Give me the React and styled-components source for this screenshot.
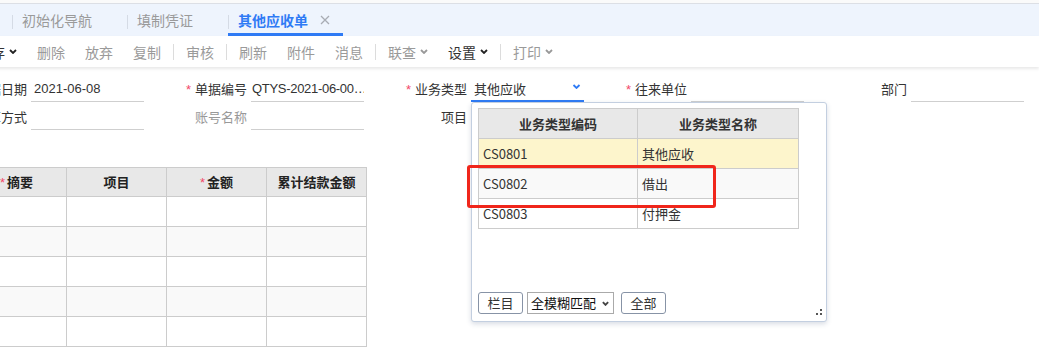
import styled, { createGlobalStyle } from 'styled-components';

const GlobalStyle = createGlobalStyle`
  html, body {
    margin: 0;
    padding: 0;
    background: #fff;
    overflow: hidden;
  }
  body {
    font-family: "Liberation Sans", "Noto Sans CJK SC", sans-serif;
    color: #333;
  }
`;

const Page = styled.div`
  position: relative;
  width: 1039px;
  height: 347px;
  overflow: hidden;
`;

const TopStrip = styled.div`
  height: 3px;
  background: #fafafa;
  border-bottom: 1px solid #dcdfe5;
`;

const TabBar = styled.div`
  display: flex;
  height: 32px;
  padding-left: 12px;
  background: #eef4fd;
`;

const Tab = styled.div`
  position: relative;
  display: flex;
  align-items: center;
  box-sizing: border-box;
  padding: 3px 13px 0 10px;
  font-size: 14px;
  font-family: "Noto Sans CJK SC", sans-serif;
  color: ${p => (p.$active ? '#2f7bf5' : '#9a9a9a')};
  font-weight: ${p => (p.$active ? 600 : 400)};
  border-bottom: 3px solid ${p => (p.$active ? '#2f7bf5' : 'transparent')};

  &::before {
    content: '';
    position: absolute;
    left: 0;
    top: 11px;
    width: 1px;
    height: 14px;
    background: #d5dbe5;
  }
`;

const CloseSlot = styled.span`
  display: flex;
  justify-content: flex-end;
  width: 22px;
  visibility: ${p => (p.$show ? 'visible' : 'hidden')};
`;

const Toolbar = styled.div`
  position: relative;
  z-index: 1;
  display: flex;
  align-items: center;
  height: 31px;
  margin-left: -33px;
  background: #fff;
  box-shadow: 0 2px 3px rgba(0, 0, 0, 0.09);
`;

const ToolItem = styled.div`
  display: flex;
  align-items: center;
  gap: 4px;
  padding: 0 10px;
  font-size: 14px;
  font-family: "Noto Sans CJK SC", sans-serif;
  color: ${p => (p.$enabled ? '#333' : '#9a9a9a')};
`;

const ToolSep = styled.div`
  width: 1px;
  height: 16px;
  margin: 0 2px;
  background: #dcdcdc;
`;

const Form = styled.div`
  padding-top: 7px;
  margin-left: -76px;
`;

const FormRow = styled.div`
  display: flex;
  height: 28px;
`;

const Field = styled.div`
  display: flex;
  width: 220px;
`;

const Label = styled.div`
  width: 103px;
  margin-right: 4px;
  padding-top: 3px;
  line-height: 24px;
  text-align: right;
  white-space: nowrap;
  font-size: 13px;
  font-family: "Noto Sans CJK SC", sans-serif;
  color: ${p => (p.$muted ? '#999' : '#333')};
`;

const Star = styled.span`
  color: #f2486a;
  margin-right: 4px;
  font-family: "Liberation Sans", sans-serif;
`;

const Input = styled.div`
  position: relative;
  box-sizing: border-box;
  width: 113px;
  height: 28px;
  padding: 3px ${p => (p.$tight ? '0 0 1px' : '3px 0')};
  line-height: 24px;
  font-size: 13px;
  letter-spacing: ${p => (p.$tight ? '-0.3px' : 'normal')};
  white-space: nowrap;
  overflow: ${p => (p.$open ? 'visible' : 'hidden')};
  border-bottom: ${p => (p.$focus ? '2px solid #2f7bf5' : '1px solid #cfcfcf')};
`;

const SelectArrow = styled.span`
  position: absolute;
  right: 3px;
  top: 10px;
  display: flex;
`;

const Popup = styled.div`
  position: absolute;
  z-index: 5;
  top: 28px;
  left: 0;
  display: flex;
  flex-direction: column;
  box-sizing: border-box;
  width: 356px;
  height: 220px;
  padding: 5px 6px 7px;
  background: #fff;
  border: 1px solid #c3cfe0;
  border-radius: 3px;
  box-shadow: 0 2px 5px rgba(60, 80, 120, 0.2);
`;

const PickGrid = styled.div`
  display: grid;
  grid-template-columns: 159px 161px;
  border-top: 1px solid #ccc;
  border-left: 1px solid #ccc;
  width: 320px;
`;

const PickCell = styled.div`
  box-sizing: border-box;
  height: 30px;
  padding-left: ${p => (p.$head ? 0 : '4px')};
  line-height: 29px;
  font-size: 13px;
  font-weight: ${p => (p.$head ? 700 : 400)};
  text-align: ${p => (p.$head ? 'center' : 'left')};
  color: #333;
  background: ${p => p.$bg};
  border-right: 1px solid #ccc;
  border-bottom: 1px solid #ccc;
`;

const PickFooter = styled.div`
  display: flex;
  align-items: center;
  margin-top: auto;
`;

const SmallButton = styled.div`
  box-sizing: border-box;
  width: 45px;
  height: 22px;
  margin-right: ${p => p.$mr || 0}px;
  line-height: 20px;
  text-align: center;
  font-size: 13px;
  font-family: "Noto Sans CJK SC", sans-serif;
  color: #333;
  border: 1px solid #8793a6;
  border-radius: 3px;
`;

const MatchSelect = styled.div`
  display: flex;
  align-items: center;
  justify-content: space-between;
  box-sizing: border-box;
  width: 87px;
  height: 22px;
  margin-right: 7px;
  padding: 0 4px 0 3px;
  font-size: 13px;
  font-family: "Noto Sans CJK SC", sans-serif;
  color: #111;
  border: 1px solid #aaa;
`;

const Grip = styled.svg`
  position: absolute;
  right: 4px;
  bottom: 6px;
`;

const Grid = styled.div`
  display: grid;
  grid-template-columns: repeat(4, 100px);
  width: 400px;
  margin: 37px 0 0 -34px;
  border-top: 1px solid #ccc;
  border-left: 1px solid #ccc;
`;

const Cell = styled.div`
  box-sizing: border-box;
  height: ${p => (p.$head ? 29 : 30)}px;
  line-height: 28px;
  text-align: center;
  font-size: 13px;
  font-weight: 700;
  font-family: "Noto Sans CJK SC", sans-serif;
  color: #222;
  background: ${p => p.$bg};
  border-right: 1px solid #ccc;
  border-bottom: 1px solid #ccc;
`;

const HeadStar = styled.span`
  color: #f2486a;
  font-weight: 400;
  margin-right: 2px;
  font-family: "Liberation Sans", sans-serif;
`;

const Annotation = styled.div`
  position: absolute;
  z-index: 10;
  left: 467px;
  top: 165px;
  box-sizing: border-box;
  width: 249px;
  height: 43px;
  border: 3px solid #f0261b;
  border-radius: 3px;
`;

const Chevron = ({ color = '#999', w = 8, sw = 1.8 }) => (
  <svg width={w} height="5" viewBox="0 0 8 5">
    <polyline points="1,1 4,4 7,1" fill="none" stroke={color} strokeWidth={sw} />
  </svg>
);

const tabs = [
  { name: '初始化导航' },
  { name: '填制凭证' },
  { name: '其他应收单', active: true },
];

const tools = [
  { name: '保存', enabled: true, menu: true },
  { name: '删除' },
  { name: '放弃' },
  { name: '复制' },
  'sep',
  { name: '审核' },
  'sep',
  { name: '刷新' },
  { name: '附件' },
  { name: '消息' },
  'sep',
  { name: '联查', menu: true },
  { name: '设置', enabled: true, menu: true },
  'sep',
  { name: '打印', menu: true },
];

const types = [
  { code: 'CS0801', name: '其他应收', bg: '#fdf5cc' },
  { code: 'CS0802', name: '借出', bg: '#f9f9f9' },
  { code: 'CS0803', name: '付押金', bg: '#fff' },
];

function TypePopup() {
  return (
    <Popup>
      <PickGrid>
        <PickCell $head $bg="#e8e8e8">业务类型编码</PickCell>
        <PickCell $head $bg="#e8e8e8">业务类型名称</PickCell>
        {types.map(t => [
          <PickCell key={t.code} $bg={t.bg}>{t.code}</PickCell>,
          <PickCell key={t.code + 'n'} $bg={t.bg}>{t.name}</PickCell>,
        ])}
      </PickGrid>
      <PickFooter>
        <SmallButton $mr={4}>栏目</SmallButton>
        <MatchSelect>
          全模糊匹配
          <Chevron color="#444" w={7} sw={2.2} />
        </MatchSelect>
        <SmallButton>全部</SmallButton>
      </PickFooter>
      <Grip width="6" height="6" viewBox="0 0 6 6">
        <rect x="4" y="0" width="2" height="2" fill="#555" />
        <rect x="0" y="4" width="2" height="2" fill="#555" />
        <rect x="4" y="4" width="2" height="2" fill="#555" />
      </Grip>
    </Popup>
  );
}

const headers = [
  { name: '摘要', star: true },
  { name: '项目' },
  { name: '金额', star: true },
  { name: '累计结款金额' },
];

export default function App() {
  return (
    <Page>
      <GlobalStyle />
      <TopStrip />
      <TabBar>
        {tabs.map(t => (
          <Tab key={t.name} $active={t.active}>
            {t.name}
            <CloseSlot $show={t.active}>
              <svg width="10" height="10" viewBox="0 0 10 10">
                <path d="M1 1 L9 9 M9 1 L1 9" stroke="#a8acb3" strokeWidth="1.3" />
              </svg>
            </CloseSlot>
          </Tab>
        ))}
      </TabBar>

      <Toolbar>
        {tools.map((t, i) =>
          t === 'sep' ? (
            <ToolSep key={i} />
          ) : (
            <ToolItem key={t.name} $enabled={t.enabled}>
              {t.name}
              {t.menu && <Chevron color={t.enabled ? '#222' : '#999'} />}
            </ToolItem>
          )
        )}
      </Toolbar>

      <Form>
        <FormRow>
          <Field>
            <Label>单据日期</Label>
            <Input>2021-06-08</Input>
          </Field>
          <Field>
            <Label><Star>*</Star>单据编号</Label>
            <Input $tight>QTYS-2021-06-00…</Input>
          </Field>
          <Field>
            <Label><Star>*</Star>业务类型</Label>
            <Input $focus $open style={{ fontFamily: '"Noto Sans CJK SC", sans-serif' }}>
              其他应收
              <SelectArrow>
                <Chevron color="#2f7bf5" w={9} />
              </SelectArrow>
              <TypePopup />
            </Input>
          </Field>
          <Field>
            <Label><Star>*</Star>往来单位</Label>
            <Input />
          </Field>
          <Field>
            <Label>部门</Label>
            <Input />
          </Field>
        </FormRow>
        <FormRow>
          <Field>
            <Label>结算方式</Label>
            <Input />
          </Field>
          <Field>
            <Label $muted>账号名称</Label>
            <Input />
          </Field>
          <Field>
            <Label>项目</Label>
            <Input />
          </Field>
        </FormRow>
      </Form>

      <Grid>
        {headers.map(h => (
          <Cell key={h.name} $head $bg="#e8e8e8">
            {h.star && <HeadStar>*</HeadStar>}
            {h.name}
          </Cell>
        ))}
        {[0, 1, 2, 3, 4].map(r =>
          headers.map(h => (
            <Cell key={r + h.name} $bg={r % 2 ? '#f9f9f9' : '#fff'} />
          ))
        )}
      </Grid>

      <Annotation />
    </Page>
  );
}
